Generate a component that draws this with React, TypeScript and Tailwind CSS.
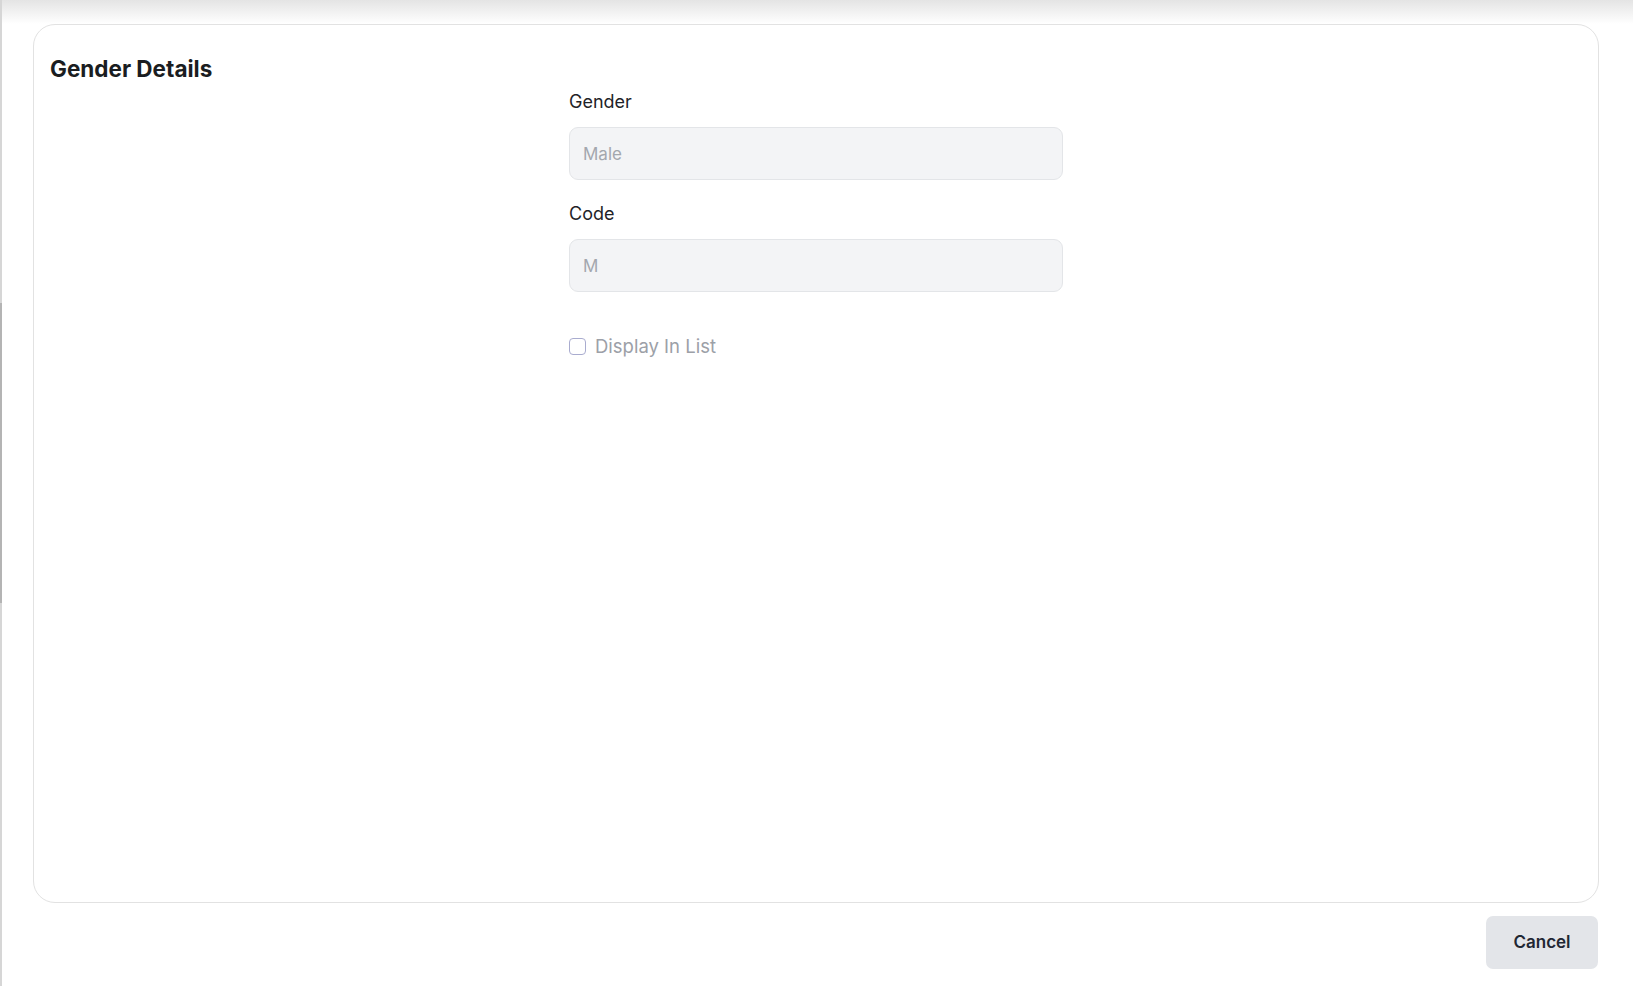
import React from "react";

const font = { fontFamily: 'Inter, "Noto Sans", sans-serif' };

function Field({ label, value }: { label: string; value: string }) {
    return (
        <div className="flex flex-col">
            <label className="text-[18px] leading-[24px] font-normal text-[#1f2328]">{label}</label>
            <input
                disabled
                value={value}
                readOnly
                className="mt-[13px] h-[53px] w-full rounded-[9px] border border-[#e3e5e8] bg-[#f3f4f6] px-[13px] text-[17px] text-[#a3a7ae] outline-none"
            />
        </div>
    );
}

export default function App() {
    return (
        <div className="flex h-[986px] w-full bg-white" style={font}>
            {/* left edge / scrollbar */}
            <div className="flex w-[2px] flex-col bg-[#d6d6d6]">
                <div className="mt-[303px] h-[300px] bg-[#b4b4b4]" />
            </div>

            <div className="flex flex-1 flex-col">
                {/* header shadow */}
                <div className="h-[24px] bg-gradient-to-b from-[#e4e4e4] to-white" />

                <div className="ml-[31px] mr-[34px] flex flex-col">
                    {/* Card */}
                    <div className="h-[879px] rounded-[22px] border border-[#e2e2e2] bg-white px-4 pt-[30px]">
                        <h2 className="text-[22.5px] leading-[28px] font-bold text-[#1a1d21]">Gender Details</h2>

                        <div className="mx-auto mt-[7px] flex w-[494px] flex-col">
                            <Field label="Gender" value="Male" />
                            <div className="mt-[22px]">
                                <Field label="Code" value="M" />
                            </div>

                            <label className="mt-[42px] flex items-center gap-[9px]">
                                <span className="h-[17px] w-[17px] rounded-[4px] border border-[#a9accf] bg-white" />
                                <span className="text-[18.5px] leading-[24px] text-[#9ca0a7]">Display In List</span>
                            </label>
                        </div>
                    </div>

                    {/* Footer */}
                    <div className="mt-[13px] flex justify-end">
                        <button className="mr-[1px] h-[53px] w-[112px] rounded-[7px] bg-[#e3e5e9] text-[17px] font-semibold text-[#1f2733]">
                            Cancel
                        </button>
                    </div>
                </div>
            </div>
        </div>
    );
}
